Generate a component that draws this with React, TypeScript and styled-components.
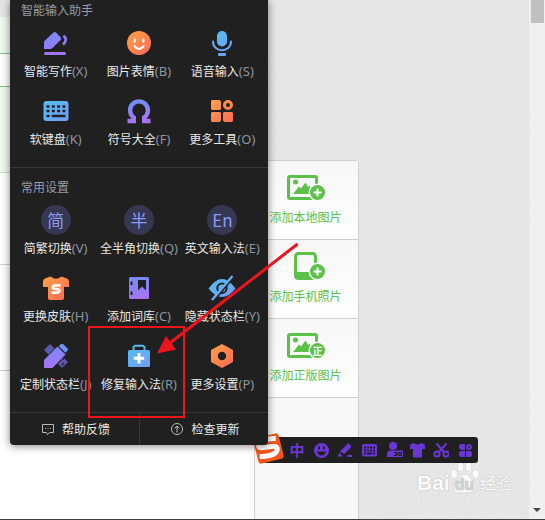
import React from "react";
import styled, { createGlobalStyle, css } from "styled-components";

const sans = `"Noto Sans CJK SC", "Noto Sans", sans-serif`;

const Global = createGlobalStyle`
  * { box-sizing: border-box; }
  body { margin: 0; background: #e6e6e6; overflow: hidden; font: 12px/20px ${sans}; }
  button { font: inherit; color: inherit; background: none; border: 0; padding: 0; margin: 0; cursor: pointer; }
  svg { display: block; flex: none; }
`;

const texture = css`
  background-color: #e6e6e6;
  background-image:
    repeating-linear-gradient(90deg, rgba(229, 229, 229, 0.8) 0 1px, transparent 1px 2px),
    repeating-linear-gradient(135deg, #ebebeb 0 1px, #e5e5e5 1px 3px);
`;

const Page = styled.div`
  position: relative;
  min-height: 100vh;
  display: grid;
  grid-template-columns: 254px 105px 1fr 16px;
  border-bottom: 1px solid #3b4048;
  overflow: hidden;
  ${texture}
`;

const Doc = styled.main`
  display: flex;
  flex-direction: column;
  padding-top: 17px;
`;

const Band = styled.div<{ $h?: number; $bg: string; $line?: string }>`
  ${(p) => (p.$h ? `height: ${p.$h}px;` : "flex: 1;")}
  background: ${(p) => p.$bg};
  border-bottom: ${(p) => (p.$line ? `1px solid ${p.$line}` : "0")};
`;

const Side = styled.aside`
  margin-top: 160px;
  display: flex;
  flex-direction: column;
  background: #f8f8f8;
  border: 1px solid #cfcfcf;
  border-bottom: 0;
  border-radius: 0 4px 0 0;
`;

const AddButton = styled.button`
  display: flex;
  flex-direction: column;
  align-items: center;
  gap: 6px;
  height: 79px;
  padding: 12px 2px 0 0;
  color: #5bc148;
  background: linear-gradient(#f7f7f7, #fefefe);
  border-bottom: 1px solid #cfcfcf;
`;

const ScrollTrack = styled.div`
  grid-column: 4;
  display: flex;
  flex-direction: column;
  justify-content: space-between;
  align-items: center;
  background: #f0f0f0;
  padding-bottom: 7px;
`;

const Thumb = styled.div`
  width: 13px;
  height: 23px;
  background: #c0c0c0;
`;

const Menu = styled.nav`
  position: absolute;
  z-index: 3;
  top: 0;
  left: 10px;
  width: 258px;
  color: #e9e9e9;
  background: #202020;
  border-radius: 0 0 4px 4px;
  box-shadow: 0 1px 8px rgba(0, 0, 0, 0.5);
`;

const Section = styled.section<{ $top?: number }>`
  padding: ${(p) => p.$top || 0}px 4px 3px;
  border-bottom: 1px solid #373737;
`;

const Title = styled.h2`
  margin: 0 0 9px 7px;
  font-size: 12px;
  font-weight: 400;
  line-height: 19px;
  color: #979daa;
`;

const Grid = styled.div`
  display: grid;
  grid-template-columns: repeat(3, 1fr);
`;

const Tool = styled.button`
  display: flex;
  flex-direction: column;
  align-items: center;
  gap: 3px;
  height: 68px;
  white-space: nowrap;
`;

const Key = styled.span`
  font-family: "Noto Sans", sans-serif;
  font-size: 13px;
  color: #8d95a5;
`;

const Disc = styled.span`
  width: 30px;
  height: 30px;
  border-radius: 50%;
  background: #363750;
  color: #8e9bfb;
  font-size: 17px;
  line-height: 30px;
  text-align: center;
`;

const Footer = styled.footer`
  display: grid;
  grid-template-columns: 129px 1fr;
  height: 32px;
`;

const FootButton = styled.button`
  display: flex;
  align-items: center;
  justify-content: center;
  gap: 8px;
  padding-left: 3px;
  & + & { border-left: 1px solid #373737; }
`;

const ImeBar = styled.div`
  position: absolute;
  z-index: 2;
  top: 437px;
  left: 262px;
  height: 26px;
  display: flex;
  align-items: center;
  gap: 8px;
  padding: 0 5px 0 27px;
  color: #6b36d6;
  background: #202020;
  border-radius: 3px;
`;

const ImeButton = styled.button`
  width: 16px;
  height: 16px;
  font-size: 15px;
  font-weight: 700;
  line-height: 16px;
`;

const Logo = styled.svg`
  position: absolute;
  left: -10px;
  top: -5px;
`;

const Watermark = styled.div`
  position: absolute;
  z-index: 1;
  left: 417px;
  top: 462px;
  color: #fbfbfb;
  text-shadow: 0 0 1px #bbb, 0 0 2px #ccc;
`;

const Brand = styled.div`
  display: flex;
  align-items: flex-end;
  height: 32px;
  font: 700 21px/22px "Liberation Sans", sans-serif;
`;

const BrandCn = styled.span`
  font: 400 16px/23px ${sans};
`;

const Site = styled.div`
  font: 400 12px/14px "Liberation Sans", sans-serif;
  color: #f0f0f0;
  text-shadow: 0 0 1px #d0d0d0;
`;

const Marks = styled.svg`
  position: absolute;
  z-index: 4;
  left: 0;
  top: 0;
  pointer-events: none;
`;

const HiddenDefs = styled.svg`
  position: absolute;
`;

const DARK = "#202020";

const Defs = () => (
  <HiddenDefs width="0" height="0" aria-hidden="true">
    <defs>
      <linearGradient id="violet" x1="0" y1="2" x2="6" y2="28" gradientUnits="userSpaceOnUse">
        <stop offset="0" stopColor="#6792fc" /><stop offset="1" stopColor="#a873f6" />
      </linearGradient>
      <linearGradient id="orange" x1="4" y1="3" x2="24" y2="27" gradientUnits="userSpaceOnUse">
        <stop offset="0" stopColor="#ffa046" /><stop offset="1" stopColor="#ff6d56" />
      </linearGradient>
      <linearGradient id="blue" x1="4" y1="3" x2="24" y2="27" gradientUnits="userSpaceOnUse">
        <stop offset="0" stopColor="#4fc0ec" /><stop offset="1" stopColor="#759dfb" />
      </linearGradient>
    </defs>
  </HiddenDefs>
);

const Icon = ({ children }: { children: React.ReactNode }) => (
  <svg width="30" height="30" viewBox="0 0 30 30" fill="none" aria-hidden="true">{children}</svg>
);

const V = "url(#violet)", O = "url(#orange)", B = "url(#blue)";

const icons: Record<string, React.ReactNode> = {
  write: <Icon>
    <path d="M3 21V14.5Q3 13.5 4 12.600L12.500 4.600Q14 3.500 15.300 4.700L19.600 9.300Q20.700 10.700 19.600 12L11.500 20Q10.500 21 9 21Z" fill={V} />
    <path d="M22.300 7.800Q27.500 11 22 16.600" stroke={V} strokeWidth="2.600" />
    <rect x="3" y="24" width="22" height="3" rx="1.500" fill="#a276f6" />
  </Icon>,
  face: <Icon>
    <circle cx="15" cy="15" r="12" fill={O} />
    <path d="M10.700 11.700v2M19.300 11.700v2M10.500 18.200Q15 23.500 19.500 18.200" stroke="#fff" strokeWidth="2.200" strokeLinecap="round" />
  </Icon>,
  mic: <Icon>
    <rect x="10" y="3" width="10" height="15.500" rx="5" fill={B} />
    <path d="M6 13.500C6 25 24 25 24 13.500" stroke={B} strokeWidth="2" strokeLinecap="round" />
    <rect x="11" y="25" width="8" height="3" rx="1" fill={B} />
  </Icon>,
  keys: <Icon>
    <rect x="2.500" y="5" width="25" height="20" rx="3" fill={B} />
    <path d="M5.500 10.500h3M10.800 10.500h3M16.100 10.500h3M21.400 10.500h3M5.500 15h3M10.800 15h3M16.100 15h3M21.400 15h3M5.500 20h3M10.800 20h13.600" stroke={DARK} strokeWidth="2.600" />
  </Icon>,
  omega: <Icon>
    <path d="M3.500 25H9.800V21.500A8.900 8.900 0 1 1 20.200 21.500V25H26.500" stroke={V} strokeWidth="4.400" />
  </Icon>,
  tools: <Icon>
    <path d="M5 4h7.500l1.500 1.500V13l-1 1H5l-1-1V5ZM5 16h8l1 1v7.500L12.500 26H5l-1-1v-8ZM17 16h8l1 1v8l-1 1h-7.500L16 24.500V17Z" fill={O} />
    <circle cx="21" cy="9" r="3.500" stroke={O} strokeWidth="3" />
  </Icon>,
  skin: <Icon>
    <path d="M9.500 3.500Q15 8 20.500 3.500L26 5.500Q28 6.500 28 8.500V14H23V25Q23 27 21 27H9Q7 27 7 25V14H2V8.500Q2 6.500 4 5.500Z" fill={O} />
    <path d="M19.500 12.500Q11.500 11.700 11.500 14.500C11.500 17 19 14.800 18.500 18Q17.500 20.500 10.500 19.500" stroke="#fff" strokeWidth="2.600" />
  </Icon>,
  book: <Icon>
    <rect x="5" y="4" width="20" height="22" rx="1.500" fill={V} />
    <path d="M6.500 8.500h2v3.500H6.500ZM6.500 18.500h2V22H6.500Z" fill={DARK} />
    <path d="M14 7H22V17.500L18 13.500 14 17.500Z" fill={DARK} />
  </Icon>,
  eye: <Icon>
    <path d="M1.500 15.500Q15-3.500 28.500 15.500Q15 32.500 1.500 15.500Z" fill={B} />
    <circle cx="15" cy="15.300" r="4.700" stroke={DARK} strokeWidth="2" />
    <path d="M6.500 28L27 3.500" stroke={DARK} strokeWidth="2" />
    <path d="M5 27L25.500 3" stroke={B} strokeWidth="2.400" />
  </Icon>,
  design: <Icon>
    <path d="M3 9L9 3l18 18-6 6Z" fill="#5a58a8" />
    <path d="M18 21l2-2M21 24l2-2M22 18.500l1.500-1.500" stroke={DARK} strokeWidth="1.200" />
    <path d="M2.500 27.500V19L16.500 5 25 13.500 11.500 27.500Z" fill={V} stroke={DARK} />
    <path d="M17.800 5.200L20 3q1-.7 2 0L26.500 7.500q.8 1 0 2L24.500 11.800Z" fill="#6e91fb" />
  </Icon>,
  kit: <Icon>
    <path d="M9.500 10V6L11 4.800h8L20.500 6v4" stroke="#55b8ee" strokeWidth="2" />
    <rect x="4" y="9" width="22" height="17" rx="1.500" fill={B} />
    <path d="M15 12v10.500M9.800 17.200h10.400" stroke="#fff" strokeWidth="3" />
  </Icon>,
  hex: <Icon>
    <path d="M15 3L26 9V21L15 27 4 21V9Z" fill={O} />
    <circle cx="15" cy="15" r="4.200" fill={DARK} />
  </Icon>,
};

type Item = { icon?: string; disc?: string; label: string; k: string };

const assist: Item[] = [
  { icon: "write", label: "智能写作", k: "X" },
  { icon: "face", label: "图片表情", k: "B" },
  { icon: "mic", label: "语音输入", k: "S" },
  { icon: "keys", label: "软键盘", k: "K" },
  { icon: "omega", label: "符号大全", k: "F" },
  { icon: "tools", label: "更多工具", k: "O" },
];

const settings: Item[] = [
  { disc: "简", label: "简繁切换", k: "V" },
  { disc: "半", label: "全半角切换", k: "Q" },
  { disc: "En", label: "英文输入法", k: "E" },
  { icon: "skin", label: "更换皮肤", k: "H" },
  { icon: "book", label: "添加词库", k: "C" },
  { icon: "eye", label: "隐藏状态栏", k: "Y" },
  { icon: "design", label: "定制状态栏", k: "J" },
  { icon: "kit", label: "修复输入法", k: "R" },
  { icon: "hex", label: "更多设置", k: "P" },
];

const Tools = ({ items }: { items: Item[] }) => (
  <Grid>
    {items.map((t) => (
      <Tool key={t.k}>
        {t.disc ? <Disc>{t.disc}</Disc> : icons[t.icon!]}
        <span>{t.label}<Key>({t.k})</Key></span>
      </Tool>
    ))}
  </Grid>
);

const GREEN = "#5bc148";

const AddIcon = ({ kind }: { kind: "picture" | "phone" | "licensed" }) => (
  <svg width="38" height="28" viewBox="0 0 38 28" fill="none" aria-hidden="true">
    {kind === "phone" ? (
      <>
        <rect x="8.500" y="1.500" width="20" height="25" rx="3" stroke={GREEN} strokeWidth="3" />
        <path d="M8 20H29V27H8Z" fill={GREEN} />
      </>
    ) : (
      <>
        <rect x="1.500" y="3.500" width="28" height="22" rx="1.500" stroke={GREEN} strokeWidth="3" />
        <circle cx="8.500" cy="9" r="2.500" fill={GREEN} />
        <path d="M6 21L12 13.500 14 15.500 18.500 9.500 21 14 23 12.500V21Z" fill={GREEN} />
      </>
    )}
    <circle cx="30.500" cy="19.500" r="9" fill="#fbfbfb" />
    <circle cx="30.500" cy="19.500" r="7.500" fill={GREEN} />
    {kind === "licensed"
      ? <text x="30.500" y="23.500" fontSize="10" fontWeight="700" fill="#fff" textAnchor="middle">正</text>
      : <path d="M30.500 15.500v8M26.500 19.500h8" stroke="#fff" strokeWidth="2" />}
  </svg>
);

const Mini = ({ children }: { children: React.ReactNode }) => (
  <svg width="16" height="16" viewBox="0 0 16 16" fill="currentColor" aria-hidden="true">{children}</svg>
);

const ime: { name: string; node: React.ReactNode }[] = [
  { name: "中文", node: "中" },
  { name: "表情", node: <Mini>
    <circle cx="8.500" cy="8.500" r="7.500" />
    <path d="M5 4.500h2v3H5ZM10 4.500h2v3h-2ZM4 9.500h9Q12 13.500 8.500 13.500T4 9.500Z" fill={DARK} />
  </Mini> },
  { name: "手写", node: <Mini>
    <path d="M3 9.500L10.500 1.800Q11.500 1 12.500 2L14.500 4.500 7.500 12ZM2 10.500L6 14.500H1ZM10.500 13h4.500v2h-4.500Z" />
  </Mini> },
  { name: "键盘", node: <Mini>
    <rect x="1" y="2" width="15" height="12.500" rx="2" />
    <path d="M3 5.500h2M6 5.500h2M9 5.500h2M12 5.500h2M3 8.500h2M6 8.500h2M9 8.500h2M12 8.500h2M3 11.500h2M6 11.500h5M12 11.500h2" stroke={DARK} strokeWidth="2" />
  </Mini> },
  { name: "账号", node: <svg width="18" height="16" viewBox="0 0 18 16" fill="currentColor" aria-hidden="true">
    <circle cx="8" cy="4" r="4" />
    <path d="M2 15V12Q2 8.500 6 8.500H18V15Z" />
    <path d="M9 10.500h3v3h-3M10 12h2M13.500 10.500h3v3h-3ZM13.500 12h3" stroke={DARK} fill="none" />
  </svg> },
  { name: "皮肤", node: <Mini>
    <path d="M5 1Q8.500 4 12 1L15 2Q16 2.500 16 4V7H13V15.500H4V7H1V4Q1 2.500 2 2Z" />
  </Mini> },
  { name: "截图", node: <Mini>
    <g fill="none" stroke="currentColor" strokeWidth="2">
      <circle cx="4" cy="12" r="2.600" /><circle cx="13" cy="12" r="2.600" />
      <path d="M3.500 1.500L11 10M13.500 1.500L6 10" />
    </g>
  </Mini> },
  { name: "工具箱", node: <Mini>
    <path d="M3.500 2H8v6H4L2 6V3.500ZM3.500 9H8v6H3.500L2 13.500V10.500ZM9 9h4.500L15 10.500v3L13.500 15H9Z" />
    <rect x="10.200" y="3.200" width="3.600" height="3.600" rx="1" fill="none" stroke="currentColor" strokeWidth="2" />
  </Mini> },
];

const SogouLogo = () => (
  <Logo width="32" height="32" viewBox="0 0 32 32" fill="none" aria-hidden="true">
    <g transform="rotate(-14 16.500 16.500)">
      <rect x="3.500" y="3.500" width="26" height="26" rx="3" fill="#f4561e" />
      <path d="M26 8.500C18 6 7.500 7.500 7.500 12C8 16.500 25 13 25 18.500C24 24.500 14 24.500 6 22" stroke="#fff" strokeWidth="5" />
    </g>
  </Logo>
);

const Paw = () => (
  <svg width="30" height="32" viewBox="0 0 30 32" fill="#fafafa" stroke="#ccc" strokeWidth="0.600" aria-hidden="true">
    <ellipse cx="4" cy="12" rx="3.500" ry="4.500" />
    <ellipse cx="10.500" cy="5" rx="3.200" ry="4.500" />
    <ellipse cx="18.500" cy="5" rx="3.200" ry="4.500" />
    <ellipse cx="25.500" cy="12" rx="3.500" ry="4.500" />
    <path d="M15 12C19 12 21 17 24 20S27 30 21 30.500 9 31 6 30.500 2 23 6 20 11 12 15 12Z" />
    <text x="14.500" y="28" fontFamily="Liberation Sans" fontSize="16" fontWeight="700" fill="#d2d2d2" stroke="none" textAnchor="middle">du</text>
  </svg>
);

export default function App() {
  return (
    <Page>
      <Global />
      <Defs />
      <Doc>
        <Band $h={37} $bg="#f0faf0" $line="#79c56f" />
        <Band $h={33} $bg="#fff" $line="#79c56f" />
        <Band $h={86} $bg="#f0faf0" $line="#c5dfc3" />
        <Band $h={92} $bg="#fff" $line="#cfcfcf" />
        <Band $h={106} $bg="#fff" $line="#cfcfcf" />
        <Band $bg="#fff" />
      </Doc>
      <Side>
        <AddButton><AddIcon kind="picture" />添加本地图片</AddButton>
        <AddButton><AddIcon kind="phone" />添加手机照片</AddButton>
        <AddButton><AddIcon kind="licensed" />添加正版图片</AddButton>
      </Side>
      <ScrollTrack>
        <Thumb />
        <svg width="8" height="4" viewBox="0 0 8 4" aria-hidden="true"><path d="M0 0h8L4 4Z" fill="#484848" /></svg>
      </ScrollTrack>

      <Watermark>
        <Brand>Bai<Paw /><BrandCn>经验</BrandCn></Brand>
        <Site>jingyan.baidu.com</Site>
      </Watermark>

      <ImeBar>
        <SogouLogo />
        {ime.map((b) => <ImeButton key={b.name} aria-label={b.name}>{b.node}</ImeButton>)}
      </ImeBar>

      <Menu>
        <Section>
          <Title>智能输入助手</Title>
          <Tools items={assist} />
        </Section>
        <Section $top={9}>
          <Title>常用设置</Title>
          <Tools items={settings} />
        </Section>
        <Footer>
          <FootButton>
            <svg width="12" height="13" viewBox="0 0 12 13" fill="none" stroke="#bbb" aria-hidden="true">
              <path d="M.5 1.500h11v8H7.500L5.500 11.500 4.500 9.500H.5Z" />
              <path d="M3 5.500h1M5.500 5.500h1M8 5.500h1" />
            </svg>
            帮助反馈
          </FootButton>
          <FootButton>
            <svg width="12" height="12" viewBox="0 0 12 12" fill="none" stroke="#bbb" aria-hidden="true">
              <circle cx="6" cy="6" r="5.500" />
              <path d="M6 9.500V3M3.500 5.500L6 3 8.500 5.500" />
            </svg>
            检查更新
          </FootButton>
        </Footer>
      </Menu>

      <Marks width="300" height="420" viewBox="0 0 300 420" fill="none" aria-hidden="true">
        <rect x="89" y="327" width="95" height="90" stroke="#ec151c" strokeWidth="2" />
        <path d="M297.500 244L170 343" stroke="#ec151c" strokeWidth="3" />
        <path d="M157 353.500L166 336 176 349.500Z" fill="#ec151c" />
      </Marks>
    </Page>
  );
}
